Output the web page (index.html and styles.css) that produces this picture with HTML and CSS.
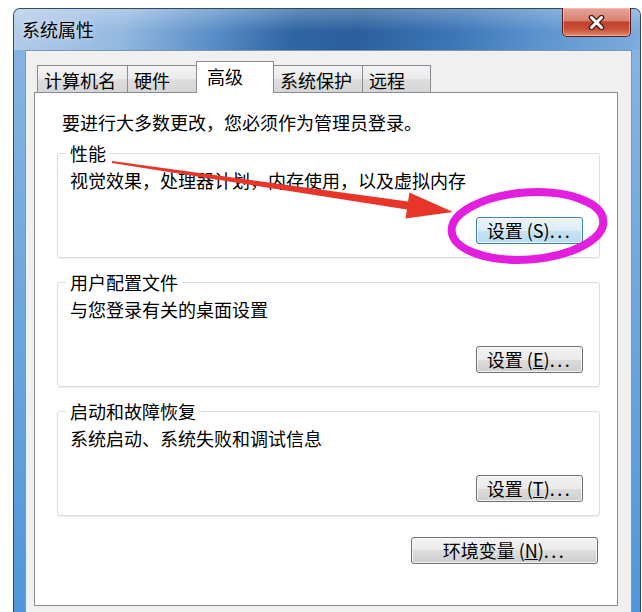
FILE: index.html
```html
<!DOCTYPE html>
<html lang="zh-CN">
<head>
    <meta charset="UTF-8">
    <meta name="viewport" content="width=device-width, initial-scale=1.0">
    <title>系统属性</title>
    <link rel="stylesheet" href="styles.css">
</head>
<body>
    <div class="window">
        <div class="titlebar">
            <span class="title">系统属性</span>
            <div class="close-btn">
                <svg width="17" height="15" viewBox="0 0 17 15">
                    <path d="M3.5 2.5 L13.5 12.5 M13.5 2.5 L3.5 12.5" stroke="#4a1c16" stroke-width="5.5" stroke-linecap="round"/>
                    <path d="M3.5 2.5 L13.5 12.5 M13.5 2.5 L3.5 12.5" stroke="#fff" stroke-width="3" stroke-linecap="round"/>
                </svg>
            </div>
        </div>

        <div class="client">
            <div class="tabs">
                <div class="tab tab-computer">计算机名</div>
                <div class="tab tab-hardware">硬件</div>
                <div class="tab tab-advanced selected">高级</div>
                <div class="tab tab-protect">系统保护</div>
                <div class="tab tab-remote">远程</div>
            </div>

            <div class="panel">
                <p class="intro">要进行大多数更改，您必须作为管理员登录。</p>

                <fieldset class="group">
                    <legend>性能</legend>
                    <p class="desc">视觉效果，处理器计划，内存使用，以及虚拟内存</p>
                    <div class="actions">
                        <button class="btn btn-default">设置<span class="key">(S)</span><span class="dots">...</span></button>
                    </div>
                </fieldset>

                <fieldset class="group">
                    <legend>用户配置文件</legend>
                    <p class="desc">与您登录有关的桌面设置</p>
                    <div class="actions">
                        <button class="btn">设置<span class="key">(<u>E</u>)</span><span class="dots">...</span></button>
                    </div>
                </fieldset>

                <fieldset class="group">
                    <legend>启动和故障恢复</legend>
                    <p class="desc">系统启动、系统失败和调试信息</p>
                    <div class="actions">
                        <button class="btn">设置<span class="key">(<u>T</u>)</span><span class="dots">...</span></button>
                    </div>
                </fieldset>

                <div class="actions env-row">
                    <button class="btn btn-wide">环境变量<span class="key">(<u>N</u>)</span><span class="dots">...</span></button>
                </div>
            </div>
        </div>
    </div>

    <!-- annotations drawn over the screenshot -->
    <svg class="annotations" width="642" height="612" viewBox="0 0 642 612">
        <path fill="#e8352a" d="M112.1 161 L408.1 201.5 L409.4 192.6 L453 212 L405.6 218.4 L406.9 209.5 L111.9 163 Z"/>
        <ellipse cx="527.5" cy="226" rx="76" ry="33.5" fill="none" stroke="#e21fdf" stroke-width="8" transform="rotate(-4 527.5 226)"/>
    </svg>
</body>
</html>
```

FILE: styles.css
```css
body {
    margin: 0;
    width: 642px;
    height: 612px;
    overflow: hidden;
    position: relative;
    background: #fff;
    font-family: "Noto Sans CJK SC", sans-serif;
    color: #000;
}
.window {
    margin: 8px 0 0 13px;
    width: 626px;
    height: 603px;
    border: 1px solid #34485e;
    border-bottom: none;
    border-radius: 7px 7px 0 0;
    background: linear-gradient(#8ab6e2, #4f97dc);
}
.titlebar {
    height: 41px;
    display: flex;
    justify-content: space-between;
    align-items: flex-start;
    padding: 0 9px 0 8px;
    border-radius: 6px 6px 0 0;
    background:
        linear-gradient(rgba(255, 255, 255, 0.25), rgba(255, 255, 255, 0) 55%),
        linear-gradient(105deg, #b4cde9 0%, #94b8e0 18%, #5a8fc8 32%, #2e65a3 45%, #2a5f9c 55%, #3d76b6 70%, #5f96d0 85%, #7eadde 100%);
}
.title {
    padding-top: 10px;
    font-size: 18px;
    line-height: 21px;
    text-shadow: 0 0 6px rgba(255, 255, 255, 0.8);
}
.close-btn {
    width: 69px;
    height: 29px;
    margin-top: -1px;
    box-sizing: border-box;
    display: flex;
    align-items: center;
    justify-content: center;
    border: 1px solid #5a2018;
    border-top: none;
    border-radius: 0 0 5px 5px;
    background: linear-gradient(#e7a597 0%, #d88372 45%, #c1402c 50%, #c95039 75%, #e08a6e 100%);
    box-shadow: inset 0 0 0 1px rgba(255, 220, 210, 0.45);
}
.client {
    margin-left: 11px;
    width: 584px;
    height: 551px;
    padding: 10px 13px 0 8px;
    border: 1px solid #7d97b3;
    border-bottom: none;
    background: #f0f0f0;
}
.tabs {
    height: 31px;
    display: flex;
    align-items: flex-end;
    padding-left: 3px;
}
.tab {
    box-sizing: border-box;
    height: 27px;
    margin-right: -1px;
    padding: 3px 0 0 6px;
    border: 1px solid #898c95;
    border-bottom: none;
    font-size: 18px;
    line-height: 22px;
    white-space: nowrap;
    background: linear-gradient(#f3f3f3, #ebebeb 50%, #dedede 50%, #d6d6d6);
}
.tab.selected {
    position: relative;
    z-index: 1;
    height: 32px;
    margin-bottom: -1px;
    padding-left: 10px;
    background: #fff;
}
.tab-computer { width: 91px; }
.tab-hardware { width: 70px; }
.tab-advanced { width: 78px; }
.tab-protect { width: 90px; }
.tab-remote { width: 69px; }
.panel {
    box-sizing: border-box;
    height: 514px;
    padding: 19px 17px 0 22px;
    border: 1px solid #898c95;
    background: #fff;
}
.intro {
    margin: 0 0 0 5px;
    font-size: 18px;
    line-height: 20px;
}
.group {
    margin: 11px 0 0;
    padding: 7px 16px 13px 12px;
    min-inline-size: 0;
    border: 1px solid #d5dfe5;
    border-radius: 3px;
    box-shadow: 0 1px 0 #eef1f3;
}
.group + .group {
    margin-top: 14px;
}
.group legend {
    margin-left: -4px;
    padding: 0 4px;
    font-size: 18px;
    line-height: 20px;
}
.desc {
    margin: 0;
    font-size: 18px;
    line-height: 20px;
}
.actions {
    display: flex;
    justify-content: flex-end;
    margin-top: 27px;
}
.env-row {
    margin-top: 21px;
    margin-right: 2px;
}
.btn {
    width: 107px;
    height: 27px;
    padding: 0;
    font-family: inherit;
    font-size: 18px;
    line-height: 25px;
    color: #000;
    border: 1px solid #707070;
    border-radius: 3px;
    background: linear-gradient(#f2f2f2, #ebebeb 50%, #dddddd 50%, #cfcfcf);
    box-shadow: inset 0 0 0 1px rgba(255, 255, 255, 0.7);
}
.btn-default {
    border-color: #3c7fb1;
    background: linear-gradient(#eef6fc, #dcecf8 50%, #c9e2f4 50%, #bcdaf0);
}
.btn-wide {
    width: 187px;
}
.key {
    margin-left: 4px;
}
.dots {
    letter-spacing: 2.5px;
}
.annotations {
    position: absolute;
    top: 0;
    left: 0;
    pointer-events: none;
}
```
